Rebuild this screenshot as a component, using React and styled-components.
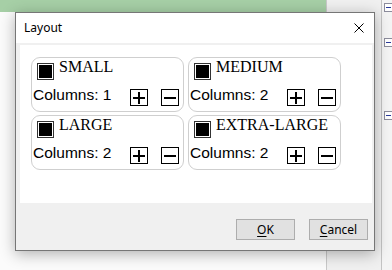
import React from "react";
import styled, { createGlobalStyle } from "styled-components";

const sizes = [
  { name: "SMALL", columns: 1 },
  { name: "MEDIUM", columns: 2 },
  { name: "LARGE", columns: 2 },
  { name: "EXTRA-LARGE", columns: 2 },
];

const App = () => {
  return (
    <>
      <GlobalStyle />
      <Desktop>
        <LeftPane>
          <GreenStrip />
        </LeftPane>
        <MidPane />
        <TreeStrip>
          <Expander top={3} />
          <Expander top={26} />
          <Expander top={64} />
        </TreeStrip>

        <Dialog>
          <TitleBar>
            <Title>Layout</Title>
            <CloseButton>
              <svg width="10" height="10" viewBox="0 0 10 10">
                <path d="M0.5 0.5 L9.5 9.5 M9.5 0.5 L0.5 9.5" stroke="#000" strokeWidth="1" />
              </svg>
            </CloseButton>
          </TitleBar>
          <Body>
            <Panel>
              <CardGrid>
                {sizes.map((s) => (
                  <Card key={s.name}>
                    <LabelRow>
                      <Check />
                      <SizeName>{s.name}</SizeName>
                    </LabelRow>
                    <ColumnsRow>
                      <ColumnsText>Columns: {s.columns}</ColumnsText>
                      <Stepper>
                        <StepButton>
                          <svg width="12" height="12" viewBox="0 0 12 12">
                            <path d="M0 6 H12 M6 0 V12" stroke="#000" strokeWidth="2" />
                          </svg>
                        </StepButton>
                        <StepButton>
                          <svg width="12" height="12" viewBox="0 0 12 12">
                            <path d="M0 6 H12" stroke="#000" strokeWidth="2" />
                          </svg>
                        </StepButton>
                      </Stepper>
                    </ColumnsRow>
                  </Card>
                ))}
              </CardGrid>
            </Panel>
            <Footer>
              <DialogButton>
                <u>O</u>K
              </DialogButton>
              <DialogButton>
                <u>C</u>ancel
              </DialogButton>
            </Footer>
          </Body>
        </Dialog>
      </Desktop>
    </>
  );
};

export default App;

const GlobalStyle = createGlobalStyle`
  html, body {
    margin: 0;
    padding: 0;
    background: #fbfbfb;
    overflow: hidden;
  }
`;

const Desktop = styled.div`
  position: relative;
  display: flex;
  width: 392px;
  height: 270px;
  overflow: hidden;
`;

const LeftPane = styled.div`
  flex: 0 0 326px;
  background: #fbfbfb;
`;

const GreenStrip = styled.div`
  height: 12px;
  background: #a6cfa6;
`;

const MidPane = styled.div`
  flex: 0 0 54px;
  background: #f0f0f0;
  border-left: 1px solid #c9c9c9;
`;

const TreeStrip = styled.div`
  flex: 1;
  display: flex;
  flex-direction: column;
  background: #f4f4f4;
  border-left: 1px solid #c4c4c4;
  padding-left: 2px;
`;

const Expander = styled.div`
  width: 7px;
  height: 7px;
  margin-top: ${(p) => p.top}px;
  border: 1px solid #8c8c9c;
  background: #fff;
  position: relative;

  &::after {
    content: "";
    position: absolute;
    left: 1px;
    right: 1px;
    top: 3px;
    height: 1px;
    background: #2a3a9a;
  }
`;

const Dialog = styled.div`
  position: absolute;
  left: 15px;
  top: 12px;
  width: 358px;
  height: 237px;
  border: 1px solid #767676;
  background: #f0f0f0;
  box-shadow: 0 3px 14px rgba(0, 0, 0, 0.3);
  display: flex;
  flex-direction: column;
  font-family: "Noto Sans", "Liberation Sans", sans-serif;
`;

const TitleBar = styled.div`
  height: 30px;
  background: #fff;
  display: flex;
  align-items: center;
  justify-content: space-between;
  padding: 0 10px 0 8px;
`;

const Title = styled.div`
  font-size: 12px;
  color: #000;
  margin-top: -1px;
`;

const CloseButton = styled.div`
  display: flex;
  width: 10px;
  height: 10px;
  margin-top: -1px;
`;

const Body = styled.div`
  flex: 1;
  display: flex;
  flex-direction: column;
  padding: 2px 2px 0 4px;
`;

const Panel = styled.div`
  height: 158px;
  background: #fff;
  padding: 12px 0 0 11px;
  box-sizing: border-box;
`;

const CardGrid = styled.div`
  display: grid;
  grid-template-columns: 153px 153px;
  column-gap: 4px;
  row-gap: 3px;
`;

const Card = styled.div`
  height: 55px;
  box-sizing: border-box;
  border: 1px solid #cfcfcf;
  border-radius: 9px;
  padding: 0 4px 0 1px;
  display: flex;
  flex-direction: column;
`;

const LabelRow = styled.div`
  height: 28px;
  display: flex;
  align-items: flex-start;
`;

const Check = styled.div`
  width: 15px;
  height: 15px;
  margin: 5px 5px 0 4px;
  background: #000;
  border: 1px solid #333;
  box-shadow: inset 0 0 0 1px #fff;
`;

const SizeName = styled.span`
  font-family: "Liberation Serif", "Times New Roman", serif;
  font-size: 16px;
  line-height: 18px;
  color: #000;
`;

const ColumnsRow = styled.div`
  display: flex;
  align-items: flex-start;
`;

const ColumnsText = styled.span`
  font-family: "Liberation Sans", Arial, sans-serif;
  font-size: 15.5px;
  line-height: 18px;
  color: #000;
`;

const Stepper = styled.div`
  margin-left: auto;
  display: flex;
  gap: 13px;
  margin-top: 3px;
`;

const StepButton = styled.div`
  width: 16px;
  height: 15px;
  border: 1px solid #000;
  display: flex;
  align-items: center;
  justify-content: center;
  background: #fff;
`;

const Footer = styled.div`
  flex: 1;
  display: flex;
  justify-content: flex-end;
  align-items: flex-start;
  gap: 14px;
  padding: 16px 4px 0 0;
`;

const DialogButton = styled.div`
  width: 57px;
  height: 19px;
  border: 1px solid #adadad;
  background: #e1e1e1;
  font-size: 12px;
  line-height: 19px;
  text-align: center;
  color: #000;

  u {
    text-decoration-thickness: 1px;
    text-underline-offset: 2px;
  }
`;
